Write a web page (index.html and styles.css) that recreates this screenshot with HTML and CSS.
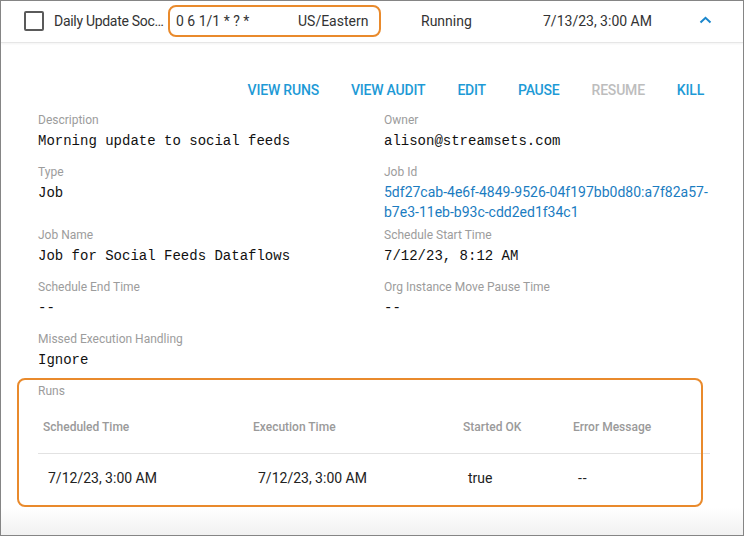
FILE: index.html
```html
<!DOCTYPE html>
<html lang="en">
<head>
    <meta charset="UTF-8">
    <meta name="viewport" content="width=device-width, initial-scale=1.0">
    <title>Scheduled Job</title>
    <link rel="stylesheet" href="styles.css">
</head>
<body>
    <div class="panel">
        <div class="row-head">
            <span class="check"></span>
            <span class="name">Daily Update Social Feeds</span>
            <div class="schedule">
                <span class="cron">0 6 1/1 * ? *</span>
                <span class="tz">US/Eastern</span>
                <span class="mark"></span>
            </div>
            <span class="status">Running</span>
            <span class="next">7/13/23, 3:00 AM</span>
            <svg class="chevron" width="13" height="8" viewBox="0 0 13 8">
                <polyline points="1.5,6.5 6.5,1.8 11.5,6.5" fill="none" stroke="#1a86cc" stroke-width="2"></polyline>
            </svg>
        </div>

        <div class="details">
            <div class="actions">
                <button class="btn">VIEW RUNS</button>
                <button class="btn">VIEW AUDIT</button>
                <button class="btn">EDIT</button>
                <button class="btn">PAUSE</button>
                <button class="btn" disabled>RESUME</button>
                <button class="btn">KILL</button>
            </div>

            <div class="fields">
                <div class="field">
                    <div class="label">Description</div>
                    <div class="value">Morning update to social feeds</div>
                </div>
                <div class="field">
                    <div class="label">Owner</div>
                    <div class="value">alison@streamsets.com</div>
                </div>
                <div class="field">
                    <div class="label">Type</div>
                    <div class="value">Job</div>
                </div>
                <div class="field field-id">
                    <div class="label">Job Id</div>
                    <a class="link" href="#">5df27cab-4e6f-4849-9526-04f197bb0d80:a7f82a57-b7e3-11eb-b93c-cdd2ed1f34c1</a>
                </div>
                <div class="field">
                    <div class="label">Job Name</div>
                    <div class="value">Job for Social Feeds Dataflows</div>
                </div>
                <div class="field">
                    <div class="label">Schedule Start Time</div>
                    <div class="value">7/12/23, 8:12 AM</div>
                </div>
                <div class="field">
                    <div class="label">Schedule End Time</div>
                    <div class="value">--</div>
                </div>
                <div class="field">
                    <div class="label">Org Instance Move Pause Time</div>
                    <div class="value">--</div>
                </div>
                <div class="field">
                    <div class="label">Missed Execution Handling</div>
                    <div class="value">Ignore</div>
                </div>
            </div>

            <div class="runs">
                <div class="label">Runs</div>
                <table class="runs-table">
                    <thead>
                        <tr>
                            <th class="col-sched">Scheduled Time</th>
                            <th class="col-exec">Execution Time</th>
                            <th class="col-ok">Started OK</th>
                            <th>Error Message</th>
                        </tr>
                    </thead>
                    <tbody>
                        <tr>
                            <td>7/12/23, 3:00 AM</td>
                            <td>7/12/23, 3:00 AM</td>
                            <td>true</td>
                            <td class="dash">--</td>
                        </tr>
                    </tbody>
                </table>
                <span class="mark mark-runs"></span>
            </div>
        </div>
    </div>
</body>
</html>
```

FILE: styles.css
```css
* {
    margin: 0;
    padding: 0;
    box-sizing: border-box;
}

body {
    font-family: Roboto, 'Liberation Sans', sans-serif;
    background: #ffffff;
    color: #333333;
}

.panel {
    width: 744px;
    height: 536px;
    border: 1px solid #858585;
    background: linear-gradient(to bottom, #ffffff 0, #ffffff 506px, #f1f1f1 100%);
    overflow: hidden;
}

/* collapsed row */

.row-head {
    height: 42px;
    display: flex;
    align-items: center;
    padding-left: 23px;
    padding-bottom: 1px;
    border-bottom: 1px solid #e6e6e6;
    box-shadow: 0 1px 2px rgba(0, 0, 0, 0.05);
    font-size: 14px;
    line-height: 20px;
    color: #333333;
}

.check {
    width: 20px;
    height: 20px;
    border: 2px solid #5a5a5a;
    border-radius: 2px;
    margin-right: 10px;
    flex: none;
}

.name {
    width: 112px;
    margin-right: 10px;
    letter-spacing: -0.3px;
    white-space: nowrap;
    overflow: hidden;
    text-overflow: ellipsis;
}

.schedule {
    display: flex;
    position: relative;
}

.cron {
    width: 122px;
}

.tz {
    width: 123px;
}

.mark {
    position: absolute;
    left: -8px;
    top: -6px;
    width: 213px;
    height: 32px;
    border: 2px solid #e98a2c;
    border-radius: 8px;
}

.status {
    width: 122px;
}

.next {
    width: 156px;
}

.chevron {
    display: block;
    margin-top: -2px;
}

/* expanded details */

.details {
    padding: 29px 33px 0 37px;
}

.actions {
    display: flex;
    justify-content: flex-end;
    gap: 32px;
    padding-right: 6px;
}

.btn {
    background: none;
    border: none;
    font-family: Roboto, 'Liberation Sans', sans-serif;
    font-size: 14px;
    font-weight: 500;
    line-height: 36px;
    letter-spacing: -0.2px;
    color: #1e9ad6;
    cursor: pointer;
}

.btn:disabled {
    color: #bdbdbd;
    cursor: default;
}

.fields {
    display: grid;
    grid-template-columns: 346px 1fr;
    row-gap: 12px;
    margin-top: 4px;
}

.label {
    font-size: 12px;
    line-height: 16px;
    color: #9c9c9c;
}

.value {
    margin-top: 2px;
    font-family: 'Liberation Mono', 'Courier New', monospace;
    font-size: 14px;
    line-height: 22px;
    color: #111111;
}

.field-id {
    margin-bottom: -7px;
}

.link {
    display: block;
    margin-top: 2px;
    font-size: 14px;
    line-height: 20px;
    color: #1a7cc1;
    text-decoration: none;
    width: 330px;
}

/* runs */

.runs {
    position: relative;
    margin-top: 12px;
}

.mark-runs {
    left: -21px;
    right: 7px;
    top: -5px;
    bottom: -5px;
    width: auto;
    height: auto;
}

.runs-table {
    width: 100%;
    border-collapse: collapse;
}

.runs-table th {
    text-align: left;
    font-size: 12px;
    font-weight: 500;
    line-height: 16px;
    color: #9a9a9a;
    padding: 20px 0 18px 5px;
    border-bottom: 1px solid #e2e2e2;
}

.runs-table td {
    font-size: 14px;
    line-height: 20px;
    color: #222222;
    padding: 14px 0 14px 10px;
}

.runs-table .dash {
    letter-spacing: 1px;
}

.col-sched,
.col-exec {
    width: 210px;
}

.col-ok {
    width: 110px;
}
```
